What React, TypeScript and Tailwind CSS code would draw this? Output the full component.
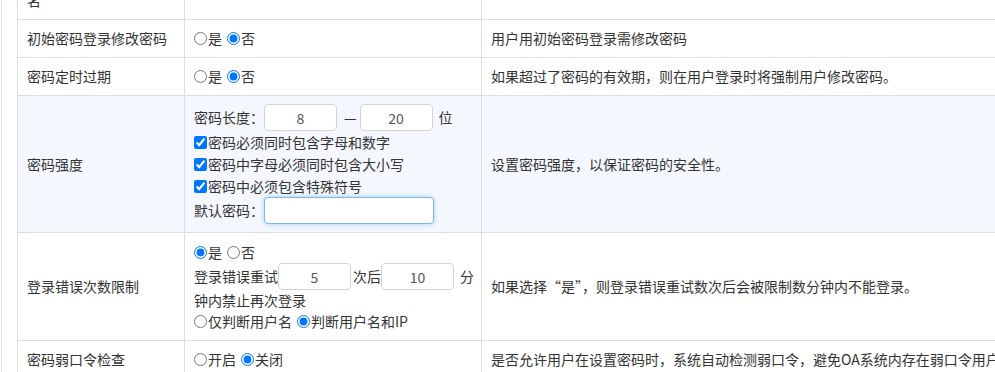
import { useState } from "react";

const td = "border border-[#dedede] px-[9px] py-2 align-middle";

const Radio = ({ name, checked, label, first }: { name: string; checked?: boolean; label: string; first?: boolean }) => (
  <label className={`flex items-center whitespace-nowrap ${first ? "" : "ml-[5px]"}`}>
    <input type="radio" name={name} defaultChecked={checked} className="m-0 mr-px w-[13px] h-[13px] shrink-0" />
    <span>{label}</span>
  </label>
);

const RadioRow = ({ h, children }: { h: string; children: React.ReactNode }) => (
  <div className={`flex items-center ${h}`}>{children}</div>
);

const Check = ({ label }: { label: string }) => (
  <label className="flex items-center h-[22px] whitespace-nowrap">
    <input type="checkbox" defaultChecked className="m-0 mr-px w-[13px] h-[13px] shrink-0" />
    <span>{label}</span>
  </label>
);

const NumInput = ({ value }: { value: string }) => (
  <input
    defaultValue={value}
    className="w-[73px] h-[27px] shrink-0 border border-[#d4d4d4] rounded-[4px] bg-white text-center text-[#555] outline-none"
  />
);

export default function App() {
  const [pwd, setPwd] = useState("");

  return (
    <div className="w-[995px] h-[372px] overflow-hidden bg-white font-['Microsoft_YaHei','Noto_Sans_CJK_SC',sans-serif] text-[14px] leading-[21px] text-[#333]">
      <div className="ml-px border-l border-[#e6e6e6] pl-[15px] h-full flow-root">
        <table className="table-fixed border-collapse w-[1180px] mt-[-40px]">
          <colgroup>
            <col className="w-[167px]" />
            <col className="w-[297px]" />
            <col />
          </colgroup>
          <tbody>
            <tr>
              <td className={td}>密码不能包含用户登录名</td>
              <td className={td}></td>
              <td className={td}></td>
            </tr>
            <tr>
              <td className={td}>初始密码登录修改密码</td>
              <td className={td}>
                <RadioRow h="h-[21px]">
                  <Radio name="init" label="是" first />
                  <Radio name="init" label="否" checked />
                </RadioRow>
              </td>
              <td className={td}>用户用初始密码登录需修改密码</td>
            </tr>
            <tr>
              <td className={td}>密码定时过期</td>
              <td className={td}>
                <RadioRow h="h-[21px]">
                  <Radio name="expire" label="是" first />
                  <Radio name="expire" label="否" checked />
                </RadioRow>
              </td>
              <td className={td}>如果超过了密码的有效期，则在用户登录时将强制用户修改密码。</td>
            </tr>
            <tr className="bg-[#f4f8fe]">
              <td className={td}>密码强度</td>
              <td className={td}>
                <div className="flex items-center h-[27px] whitespace-nowrap">
                  <span>密码长度：</span>
                  <NumInput value="8" />
                  <span className="ml-[7px] mr-[3px]">—</span>
                  <NumInput value="20" />
                  <span className="ml-[6px]">位</span>
                </div>
                <Check label="密码必须同时包含字母和数字" />
                <Check label="密码中字母必须同时包含大小写" />
                <Check label="密码中必须包含特殊符号" />
                <div className="flex items-center h-[27px] whitespace-nowrap">
                  <span>默认密码：</span>
                  <input
                    value={pwd}
                    onChange={(e) => setPwd(e.target.value)}
                    className="w-[170px] h-[27px] shrink-0 border border-[#7db8ec] rounded-[4px] bg-white outline-none shadow-[0_0_5px_rgba(102,175,233,0.6)] px-2"
                  />
                </div>
              </td>
              <td className={td}>设置密码强度，以保证密码的安全性。</td>
            </tr>
            <tr>
              <td className={td}>登录错误次数限制</td>
              <td className={td}>
                <RadioRow h="h-[22px]">
                  <Radio name="limit" label="是" checked first />
                  <Radio name="limit" label="否" />
                </RadioRow>
                <div className="flex items-center h-[27px] whitespace-nowrap">
                  <span>登录错误重试</span>
                  <NumInput value="5" />
                  <span className="ml-[2px]">次后</span>
                  <NumInput value="10" />
                  <span className="ml-[6px]">分</span>
                </div>
                <div className="h-[21px] flex items-center whitespace-nowrap">钟内禁止再次登录</div>
                <RadioRow h="h-[21px]">
                  <Radio name="judge" label="仅判断用户名" first />
                  <Radio name="judge" label="判断用户名和IP" checked />
                </RadioRow>
              </td>
              <td className={td}>如果选择“是”，则登录错误重试数次后会被限制数分钟内不能登录。</td>
            </tr>
            <tr>
              <td className={td}>密码弱口令检查</td>
              <td className={td}>
                <RadioRow h="h-[21px]">
                  <Radio name="weak" label="开启" first />
                  <Radio name="weak" label="关闭" checked />
                </RadioRow>
              </td>
              <td className={`${td} whitespace-nowrap`}>
                是否允许用户在设置密码时，系统自动检测弱口令，避免OA系统内存在弱口令用户，提高系统安全性。
              </td>
            </tr>
          </tbody>
        </table>
      </div>
    </div>
  );
}
